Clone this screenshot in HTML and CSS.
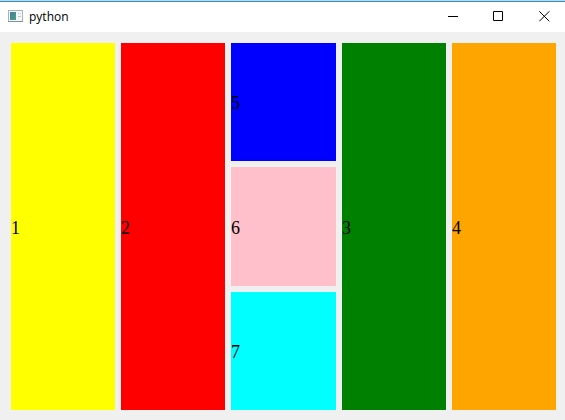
FILE: index.html
```
<!DOCTYPE html>
<html lang="en">
<head>
    <meta charset="UTF-8">
    <meta name="viewport" content="width=device-width, initial-scale=1.0">
    <title>python</title>
    <link rel="stylesheet" href="styles.css">
</head>
<body>
    <div class="window">
        <!-- title bar -->
        <div class="title-bar">
            <svg class="app-icon" width="15" height="12" viewBox="0 0 15 12">
                <defs>
                    <linearGradient id="iconFill" x1="0" y1="0" x2="1" y2="1">
                        <stop offset="0" stop-color="#4080a0"/>
                        <stop offset="1" stop-color="#50a080"/>
                    </linearGradient>
                </defs>
                <rect x="0.5" y="0.5" width="14" height="11" fill="#f5f6f8" stroke="#a9b3c0"/>
                <path d="M0 11.5h15" stroke="#8490a0"/>
                <rect x="2" y="2" width="6" height="8" fill="url(#iconFill)"/>
                <path d="M10 3.5h1M12 3.5h1M10 6.5h3" stroke="#c3c9d2"/>
            </svg>
            <div class="title">python</div>
            <div class="controls">
                <button class="control-btn" aria-label="Minimize">
                    <svg width="11" height="11" viewBox="0 0 11 11"><path d="M1 5.5h10"/></svg>
                </button>
                <button class="control-btn" aria-label="Maximize">
                    <svg width="11" height="11" viewBox="0 0 11 11"><path d="M0.5 0.5h9v9h-9z"/></svg>
                </button>
                <button class="control-btn" aria-label="Close">
                    <svg width="11" height="11" viewBox="0 0 11 11"><path d="M0.3 0.3l10 10M10.3 0.3l-10 10"/></svg>
                </button>
            </div>
        </div>

        <!-- labels -->
        <div class="content">
            <div class="label yellow">1</div>
            <div class="label red">2</div>
            <div class="stack">
                <div class="label blue">5</div>
                <div class="label pink">6</div>
                <div class="label cyan">7</div>
            </div>
            <div class="label green">3</div>
            <div class="label orange">4</div>
        </div>
    </div>
</body>
</html>
```

FILE: styles.css
```
* {
    margin: 0;
    padding: 0;
    box-sizing: border-box;
}

body {
    width: 565px;
    height: 420px;
    overflow: hidden;
    background: #f0f0f0;
}

.window {
    height: 100%;
    display: flex;
    flex-direction: column;
    border-top: 1px solid #b4dcf5;
}

.title-bar {
    height: 31px;
    display: flex;
    align-items: center;
    padding-left: 8px;
    background: #fff;
    border-top: 1px solid #3c8cc8;
}

.app-icon {
    margin-top: -2px;
}

.title {
    margin-left: 6px;
    font-family: "Open Sans", "Noto Sans", sans-serif;
    font-size: 12px;
    line-height: 30px;
    color: #000;
}

.controls {
    display: flex;
    margin-left: auto;
    margin-right: -2px;
}

.control-btn {
    width: 46px;
    height: 30px;
    display: flex;
    align-items: center;
    justify-content: center;
    background: none;
    border: none;
}

.control-btn svg {
    margin-top: -1px;
    fill: none;
    stroke: #000;
    stroke-width: 1;
}

.content {
    flex: 1;
    display: grid;
    grid-template-columns: 104px 104px 105px 104px 104px;
    gap: 6px;
    padding: 11px 9px 10px 11px;
}

.stack {
    display: grid;
    grid-template-rows: 118px 119px 118px;
    gap: 6px;
}

.label {
    display: flex;
    align-items: center;
    padding-top: 2px;
    font-family: "Liberation Serif", serif;
    font-size: 18px;
    line-height: 20px;
    color: #000;
}

.yellow { background: #ffff00; }
.red { background: #ff0000; }
.blue { background: #0000ff; }
.pink { background: #ffc0cb; }
.cyan { background: #00ffff; }
.green { background: #008000; }
.orange { background: #ffa500; }
```
